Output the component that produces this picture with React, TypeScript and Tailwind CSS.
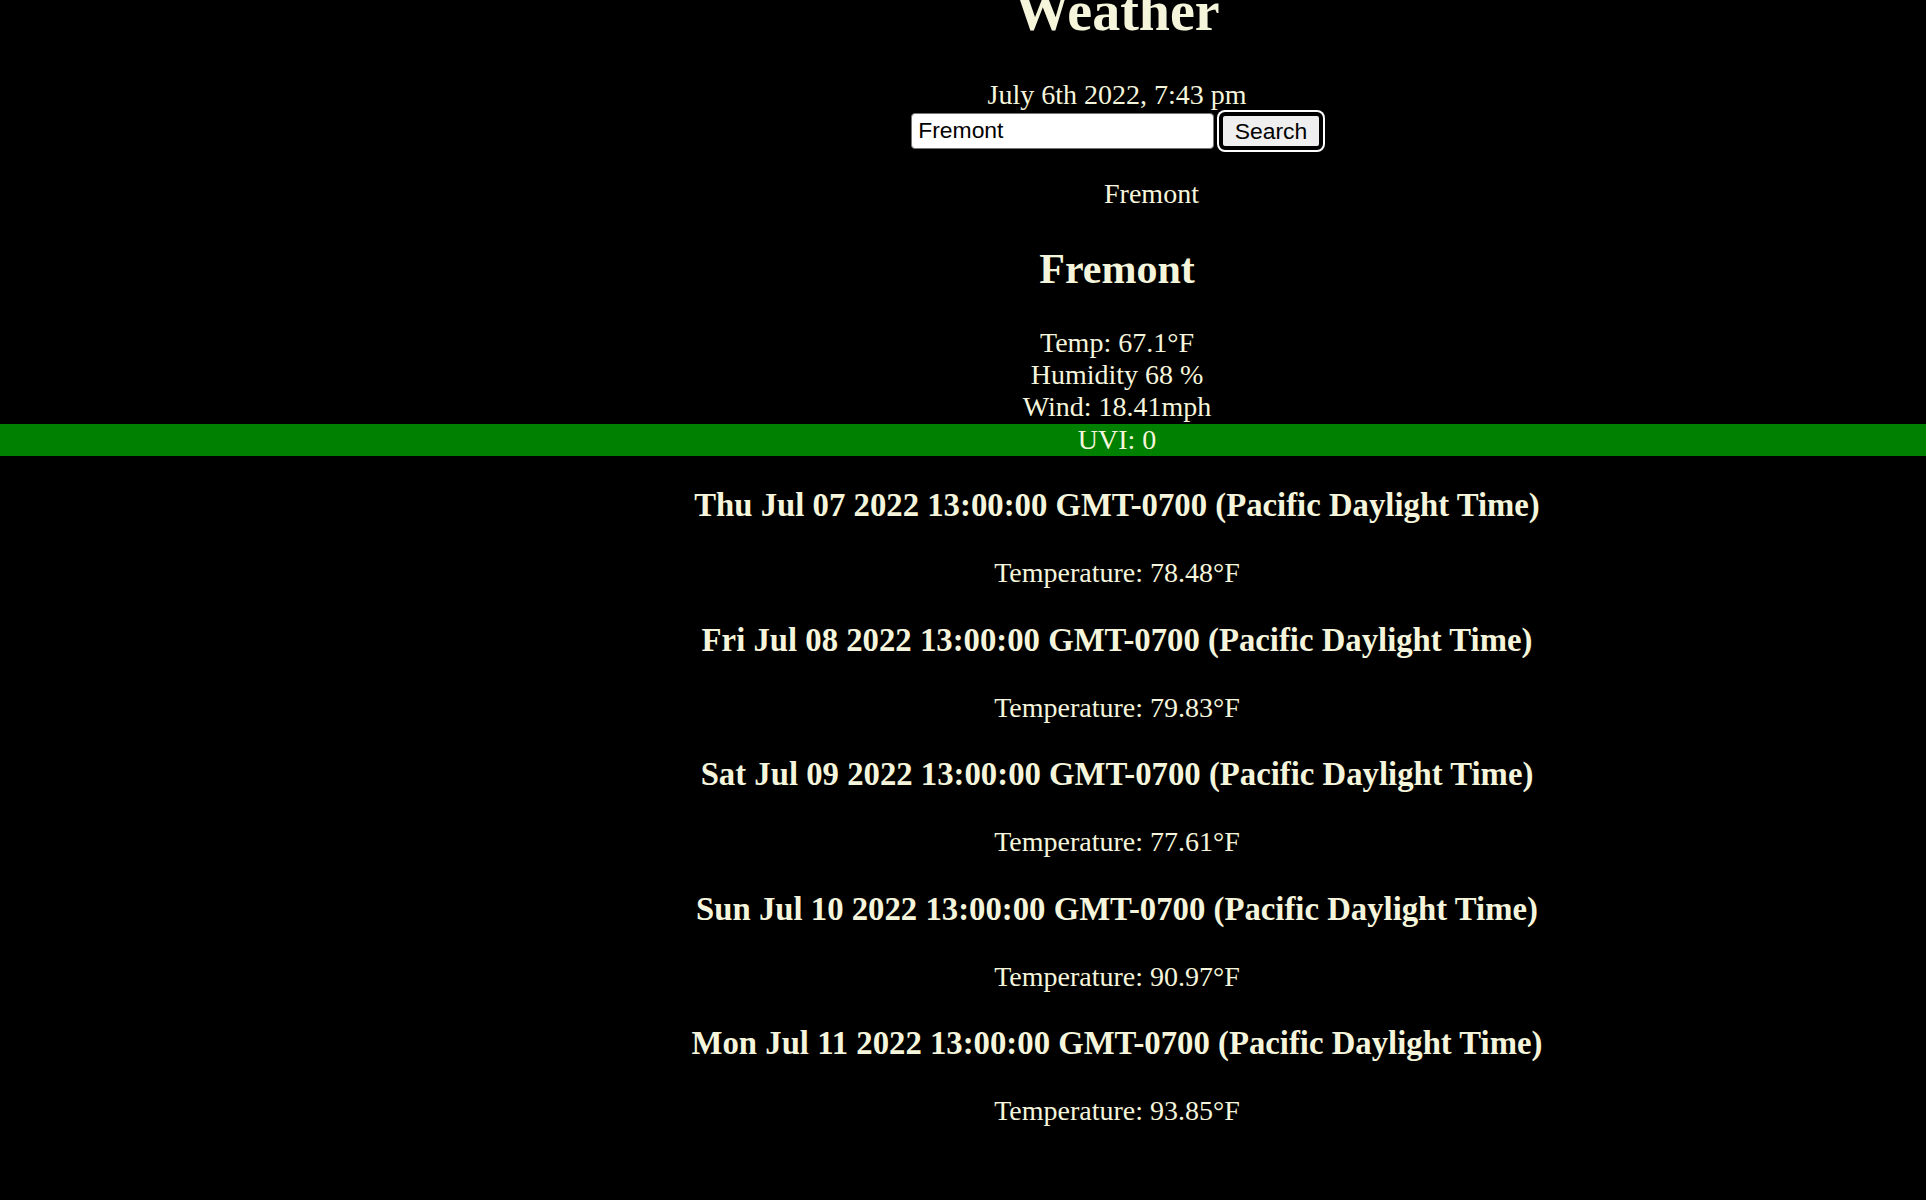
import React, { useState } from "react";

const forecast = [
  { day: "Thu Jul 07 2022 13:00:00 GMT-0700 (Pacific Daylight Time)", temp: "78.48" },
  { day: "Fri Jul 08 2022 13:00:00 GMT-0700 (Pacific Daylight Time)", temp: "79.83" },
  { day: "Sat Jul 09 2022 13:00:00 GMT-0700 (Pacific Daylight Time)", temp: "77.61" },
  { day: "Sun Jul 10 2022 13:00:00 GMT-0700 (Pacific Daylight Time)", temp: "90.97" },
  { day: "Mon Jul 11 2022 13:00:00 GMT-0700 (Pacific Daylight Time)", temp: "93.85" },
];

const App = () => {
  const [city, setCity] = useState("Fremont");

  return (
    <div className="min-h-screen bg-black text-[#f5f5dc] font-['Liberation_Serif',serif] text-[28px] leading-[32.2px] text-center overflow-hidden">
      <div className="-mt-[21px] pl-[308px]">
        <h1 className="text-[56px] leading-[64.4px] font-bold mb-[36px]">Weather</h1>
        <div>July 6th 2022, 7:43 pm</div>
        <form
          className="flex items-center justify-center gap-[5px]"
          onSubmit={(e) => e.preventDefault()}
        >
          <input
            type="text"
            value={city}
            onChange={(e) => setCity(e.target.value)}
            className="w-[303px] h-[36.5px] bg-white text-black border border-[#767676] rounded-[4px] px-[6px] font-['Liberation_Sans',Arial,sans-serif] text-[22.9px] leading-[26px] outline-none"
          />
          <button
            type="submit"
            className="h-[38.3px] px-[11.5px] bg-[#efefef] text-black border-[4px] border-black rounded-[6px] ring-2 ring-white font-['Liberation_Sans',Arial,sans-serif] text-[22.9px] leading-[26px] cursor-pointer"
          >
            Search
          </button>
        </form>
        <ul className="list-none pl-[69px] mt-[28px]">
          <li>{city}</li>
        </ul>
        <h2 className="text-[42px] leading-[48.3px] font-bold mt-[34.9px] mb-[33.6px]">Fremont</h2>
        <div>Temp: 67.1°F</div>
        <div>Humidity 68 %</div>
        <div>Wind: 18.41mph</div>
      </div>
      <div className="bg-[#008000] pl-[308px]">UVI: 0</div>
      <div className="pl-[308px] pt-[31.5px]">
        {forecast.map((f) => (
          <div key={f.day}>
            <h3 className="text-[32.76px] leading-[37.7px] font-bold mb-[32.5px]">{f.day}</h3>
            <p className="mb-[32.1px]">Temperature: {f.temp}°F</p>
          </div>
        ))}
      </div>
    </div>
  );
};

export default App;
